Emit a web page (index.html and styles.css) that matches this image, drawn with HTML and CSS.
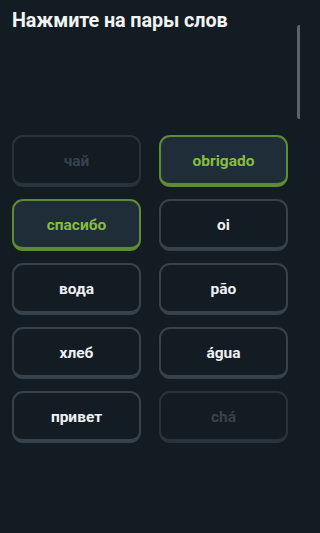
FILE: index.html
```html
<!DOCTYPE html>
<html lang="ru">
<head>
<meta charset="utf-8">
<link rel="stylesheet" href="styles.css">
</head>
<body>
<div class="screen">
  <h1 class="title">Нажмите на пары слов</h1>
  <div class="grid">
    <div class="card done">чай</div>
    <div class="card selected">obrigado</div>
    <div class="card selected">спасибо</div>
    <div class="card">oi</div>
    <div class="card">вода</div>
    <div class="card">pão</div>
    <div class="card">хлеб</div>
    <div class="card">água</div>
    <div class="card">привет</div>
    <div class="card done">chá</div>
  </div>
  <div class="scrollbar"></div>
</div>
</body>
</html>
```

FILE: styles.css
```css
html, body {
  margin: 0;
  padding: 0;
  background: #131c23;
}
.screen {
  position: relative;
  width: 300px;
  height: 533px;
  overflow: hidden;
  background: #131c23;
  font-family: Roboto, "Liberation Sans", sans-serif;
}
.title {
  margin: 0;
  padding: 9px 12px 0;
  font-size: 19.8px;
  font-weight: 700;
  line-height: 24px;
  color: #f1f3f4;
  letter-spacing: -0.1px;
}
.grid {
  display: grid;
  grid-template-columns: 129px 129px;
  column-gap: 18px;
  row-gap: 12px;
  padding: 102px 12px 0;
}
.card {
  box-sizing: border-box;
  height: 52px;
  border: 2px solid #36434d;
  border-bottom-width: 4px;
  border-radius: 11px;
  display: flex;
  align-items: center;
  justify-content: center;
  font-size: 15.5px;
  font-weight: 700;
  color: #eef1f3;
  padding-top: 1px;
}
.card.selected {
  background: #1f2d38;
  border-color: #5f8b32;
  color: #85bd43;
}
.card.done {
  border-color: #29333b;
  color: #37434c;
}
.scrollbar {
  position: absolute;
  right: 0;
  top: 25px;
  width: 3px;
  height: 94px;
  background: #5b6166;
  border-radius: 2px 0 0 2px;
}
```
